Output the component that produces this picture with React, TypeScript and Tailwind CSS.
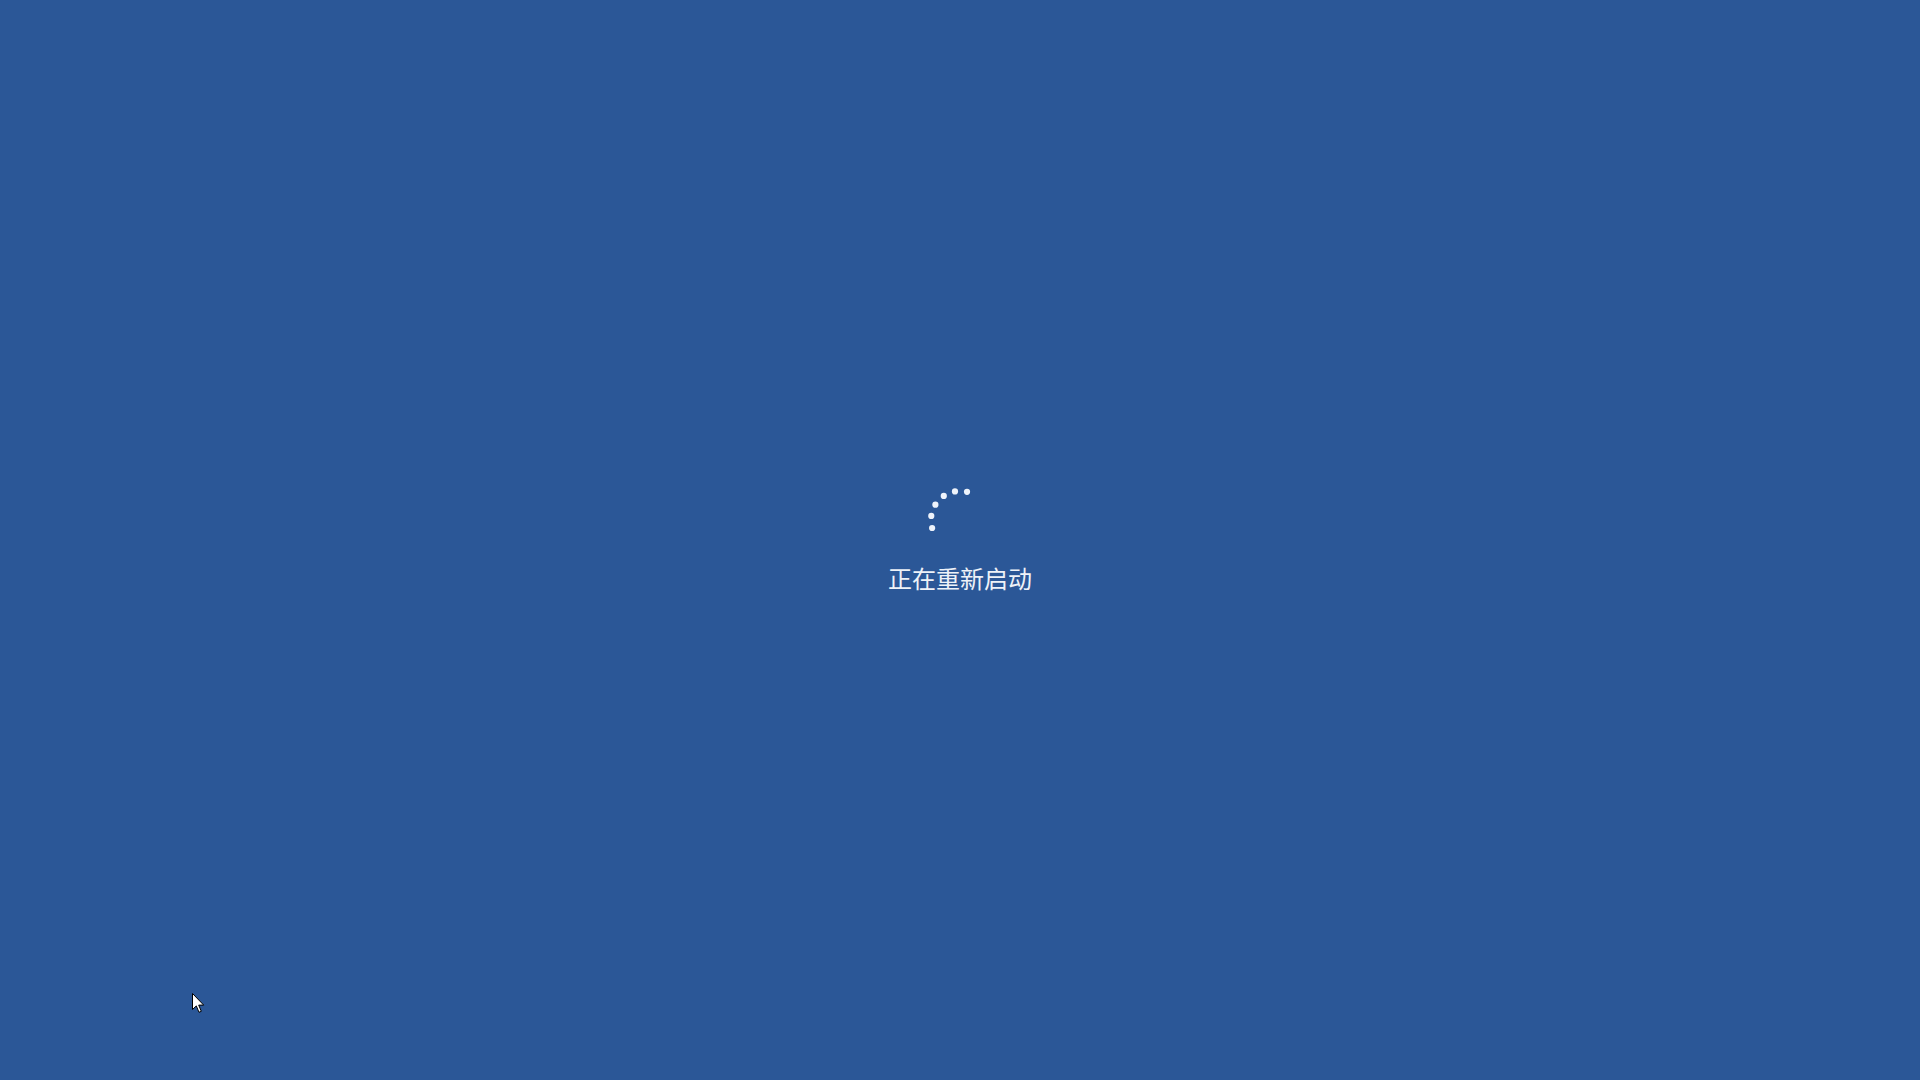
import React from "react";

const angles = [164, 188, 212, 236, 260, 284];

export default function App() {
  return (
    <div className="relative h-[1080px] w-[1920px] overflow-hidden bg-[#2b5797]">
      <div className="flex flex-col items-center pt-[488px]">
        <svg width="64" height="64" viewBox="0 0 64 64">
          {angles.map((a) => {
            const r = (a * Math.PI) / 180;
            return (
              <circle
                key={a}
                cx={32 + 29 * Math.cos(r)}
                cy={32 + 29 * Math.sin(r)}
                r="3.1"
                fill="#eef3fb"
              />
            );
          })}
        </svg>
        <div
          className="mt-[10px] text-[24px] leading-[32px] text-[#eef2f8]"
          style={{ fontFamily: '"Noto Sans CJK SC", "Noto Sans", sans-serif' }}
        >
          正在重新启动
        </div>
      </div>
      <svg
        className="absolute left-[192px] top-[993px]"
        width="14"
        height="22"
        viewBox="0 0 14 22"
      >
        <path
          d="M0.5 0.5 L0.5 16.5 L4.3 12.9 L7 19.3 L9.3 18.3 L6.7 12.1 L11.7 12.1 Z"
          fill="#ffffff"
          stroke="#000000"
          strokeWidth="1"
          strokeLinejoin="round"
        />
      </svg>
    </div>
  );
}
